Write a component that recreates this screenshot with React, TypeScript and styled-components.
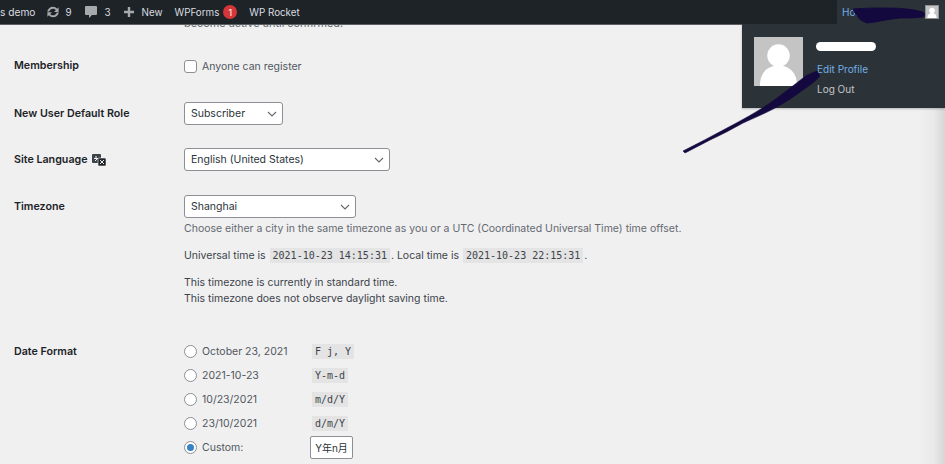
import React from "react";
import styled, { createGlobalStyle } from "styled-components";

const Global = createGlobalStyle`
  html, body { margin: 0; padding: 0; height: 100%; overflow: hidden; background: #f0f0f1; }
  body { font-family: Inter, "Liberation Sans", sans-serif; font-size: 10.5px; color: #3c434a; }
`;
const Page = styled.div`
  position: relative; width: 945px; height: 464px; overflow: hidden; background: #f0f0f1;
`;
const Bar = styled.header`
  position: relative; z-index: 2; height: 24px; background: #1d2327; color: #dcdde0;
  display: flex; align-items: center; font-size: 9.8px; border-bottom: 1px solid #5c6064;
  margin-bottom: -1px;
`;
const SiteName = styled.span`
  white-space: nowrap; font-size: 10.2px;
`;
const BarItem = styled.span<{ $ml: number; $gap: number }>`
  display: inline-flex; align-items: center; gap: ${p => p.$gap}px; margin-left: ${p => p.$ml}px; white-space: nowrap;
`;
const Badge = styled.span`
  width: 14px; height: 14px; border-radius: 50%; background: #d63638; color: #fff; font-size: 9px;
  display: inline-flex; align-items: center; justify-content: center;
`;
const Account = styled.div`
  margin-left: auto; width: 108px; height: 24px; background: #2c3338; color: #72aee6;
  display: flex; align-items: center; justify-content: space-between; padding: 0 6px 0 5px; box-sizing: border-box;
`;
const Howdy = styled.span` font-size: 10px; `;
const SmallAvatar = styled.span`
  width: 14px; height: 14px; background: #c4c4c4; display: inline-flex; border: 1px solid #8e9193; box-sizing: border-box;
`;
const Dropdown = styled.div`
  position: absolute; z-index: 3; top: 24px; left: 742px; width: 203px; height: 84px; background: #2c3338;
  box-shadow: 0 1px 2px rgba(0,0,0,.25); box-sizing: border-box; padding: 13px 0 0 12px; display: flex; gap: 14px;
`;
const BigAvatar = styled.div`
  width: 49px; height: 49px; background: #c4c4c4; overflow: hidden; display: flex;
`;
const Links = styled.div`
  display: flex; flex-direction: column; padding-top: 27px; gap: 9px; font-size: 10px; line-height: 11px;
`;
const EditLink = styled.span` color: #72aee6; `;
const LogOut = styled.span` color: #c3c4c7; `;
const Redact = styled.div`
  position: absolute; z-index: 4; left: 816px; top: 42px; width: 60px; height: 9px; background: #fff; border-radius: 5px;
`;
const Ink = styled.svg`
  position: absolute; z-index: 5; left: 0; top: 0; pointer-events: none;
`;
const Edge = styled.div`
  position: absolute; z-index: 1; right: 0; top: 24px; bottom: 0; width: 26px;
  background: linear-gradient(to right, rgba(214,214,214,0) 0%, rgba(214,214,214,.25) 55%, rgba(214,214,214,1) 100%);
`;
const Content = styled.main`
  display: grid; grid-template-columns: 170px 1fr; padding-left: 14px; margin-top: -9px;
`;
const Clipped = styled.p`
  grid-column: 2; margin: 0 0 28px; line-height: 14px; color: #646970; font-size: 10.9px;
`;
const Label = styled.div<{ $mb: number; $lh: number }>`
  font-weight: 600; color: #1d2327; font-size: 10.7px; line-height: ${p => p.$lh}px; margin-bottom: ${p => p.$mb}px;
  display: flex; align-items: center; align-self: start; gap: 3px; height: ${p => p.$lh}px;
`;
const Field = styled.div<{ $mb: number }>`
  margin-bottom: ${p => p.$mb}px; min-width: 0;
`;
const CheckLine = styled.label`
  display: flex; align-items: center; gap: 5px; height: 16px; color: #50575e;
`;
const CheckBox = styled.span`
  width: 13px; height: 13px; box-sizing: border-box; background: #fff; border: 1px solid #8c8f94; border-radius: 3px; display: inline-block;
`;
const SelectBox = styled.div<{ $w: number }>`
  width: ${p => p.$w}px; height: 23px; box-sizing: border-box; background: #fff; border: 1px solid #8c8f94;
  border-radius: 3px; display: flex; align-items: center; justify-content: space-between;
  padding: 0 5px 0 6px; color: #2c3338;
`;
const Hint = styled.p` margin: 3px 0 0; color: #646970; line-height: 16px; `;
const Para = styled.p<{ $mt: number }>` margin: ${p => p.$mt}px 0 0; line-height: 16px; color: #3c434a; `;
const Code = styled.code`
  font-family: "DejaVu Sans Mono", monospace; font-size: 10px; background: #e4e4e4; color: #3c434a;
  padding: 2px 3px; margin: 0 1px;
`;
const RadioRow = styled.div`
  display: grid; grid-template-columns: 127px auto; align-items: center; height: 24px; justify-items: start;
`;
const RadioLabel = styled.label`
  display: flex; align-items: center; gap: 5px; color: #50575e;
`;
const Radio = styled.span<{ $on?: boolean }>`
  width: 13px; height: 13px; box-sizing: border-box; border-radius: 50%; border: 1px solid #8c8f94; background: #fff;
  display: inline-flex; align-items: center; justify-content: center;
  &::after { content: ""; width: 7px; height: 7px; border-radius: 50%; background: ${p => (p.$on ? "#3582c4" : "transparent")}; }
`;
const CustomInput = styled.div`
  height: 23px; box-sizing: border-box; width: 43px; margin-left: -1px; background: #fff; border: 1px solid #8c8f94; border-radius: 2px;
  display: flex; align-items: center; justify-content: center; font-size: 10px; color: #2c3338;
  font-family: Inter, "Noto Sans CJK SC", sans-serif; white-space: nowrap;
`;

const Chevron = () => (
  <svg width="10" height="6" viewBox="0 0 10 6" fill="none" stroke="#646970" strokeWidth="1.1"><path d="M1 1l4 4 4-4" /></svg>
);
const Person = ({ s }: { s: number }) => (
  <svg width={s} height={s} viewBox="0 0 50 50"><circle cx="25" cy="19" r="11.5" fill="#fff" /><path d="M6 50c0-14 8-21 19-21s19 7 19 21z" fill="#fff" /></svg>
);
const Updates = () => (
  <svg width="16" height="16" viewBox="0 0 20 20" fill="#a7aaad"><path d="M10 3.500c2.100 0 3.900 1 5.100 2.500L17 4.200V10h-5.800l2.300-2.300C12.700 6.600 11.400 6 10 6 7.800 6 5.900 7.500 5.300 9.500H2.700C3.400 6.100 6.400 3.500 10 3.500zM3 10.200h5.800l-2.300 2.300c.8 1 2.100 1.600 3.500 1.600 2.200 0 4.100-1.500 4.700-3.600h2.600c-.7 3.500-3.700 6-7.300 6-2.100 0-3.900-1-5.100-2.500L3 15.900z" /></svg>
);
const Comment = () => (
  <svg width="14" height="14" viewBox="0 0 14 14" fill="#a7aaad"><path d="M2 1h10a1 1 0 0 1 1 1v7a1 1 0 0 1-1 1H8l-3 3v-3H2a1 1 0 0 1-1-1V2a1 1 0 0 1 1-1z" /></svg>
);
const Plus = () => (
  <svg width="12" height="12" viewBox="0 0 12 12" fill="#a7aaad"><path d="M4.800 1h2.400v3.800H11v2.400H7.200V11H4.800V7.200H1V4.800h3.800z" /></svg>
);
const Translate = () => (
  <svg width="16" height="14" viewBox="0 0 16 14"><rect x="1" y="1" width="9" height="9" rx="1" fill="#3c434a" /><path d="M3 5.500h4M5 3v2M4 8l3-3" stroke="#f0f0f1" strokeWidth="1" fill="none" /><rect x="7" y="5" width="8" height="8" rx="1" fill="#1d2327" stroke="#f0f0f1" strokeWidth=".6" /><path d="M9 7l4 4M13 7l-4 4" stroke="#f0f0f1" strokeWidth="1" /></svg>
);

const formats = [
  ["October 23, 2021", "F j, Y"],
  ["2021-10-23", "Y-m-d"],
  ["10/23/2021", "m/d/Y"],
  ["23/10/2021", "d/m/Y"],
];

export default function App() {
  return (
    <Page>
      <Global />
      <Bar>
        <SiteName>s demo</SiteName>
        <BarItem $ml={10} $gap={4}><Updates />9</BarItem>
        <BarItem $ml={12} $gap={7}><Comment />3</BarItem>
        <BarItem $ml={12} $gap={7}><Plus />New</BarItem>
        <BarItem $ml={12} $gap={4}>WPForms<Badge>1</Badge></BarItem>
        <BarItem $ml={12} $gap={0}>WP Rocket</BarItem>
        <Account>
          <Howdy>Ho...</Howdy>
          <SmallAvatar><Person s={12} /></SmallAvatar>
        </Account>
      </Bar>
      <Dropdown>
        <BigAvatar><Person s={49} /></BigAvatar>
        <Links>
          <EditLink>Edit Profile</EditLink>
          <LogOut>Log Out</LogOut>
        </Links>
      </Dropdown>
      <Redact />
      <Ink width="945" height="464" viewBox="0 0 945 464">
        <path d="M683 151C697 144 712 136 727 128C742 120 757 112 770 103C783 94 795 84 807 75L817 71L820 76C815 82 810 85 803 90C795 96 786 102 777 107C766 113 754 118 743 123C732 129 721 135 710 140L685 153Z" fill="#14093f" stroke="#14093f" strokeWidth=".6" strokeLinejoin="round" />
        <path d="M853 9C865 8 876 8 887 8C900 8 912 9 923 12C925 14 925 16 923 17C915 18 908 18 900 18C888 19 878 22 867 23C862 21 860 20 858 17C856 14 854 12 853 9Z" fill="#14093f" stroke="#14093f" strokeLinejoin="round" />
      </Ink>
      <Edge />
      <Content>
        <Clipped>become active until confirmed.</Clipped>
        <Label $mb={28} $lh={16}>Membership</Label>
        <Field $mb={28}><CheckLine><CheckBox />Anyone can register</CheckLine></Field>
        <Label $mb={23} $lh={23}>New User Default Role</Label>
        <Field $mb={23}><SelectBox $w={99}>Subscriber<Chevron /></SelectBox></Field>
        <Label $mb={24} $lh={23}>Site Language <Translate /></Label>
        <Field $mb={24}><SelectBox $w={206}>English (United States)<Chevron /></SelectBox></Field>
        <Label $mb={32} $lh={23}>Timezone</Label>
        <Field $mb={32}>
          <SelectBox $w={172}>Shanghai<Chevron /></SelectBox>
          <Hint>Choose either a city in the same timezone as you or a UTC (Coordinated Universal Time) time offset.</Hint>
          <Para $mt={11}>Universal time is <Code>2021-10-23 14:15:31</Code>. Local time is <Code>2021-10-23 22:15:31</Code>.</Para>
          <Para $mt={11}>This timezone is currently in standard time.<br />This timezone does not observe daylight saving time.</Para>
        </Field>
        <Label $mb={0} $lh={26}>Date Format</Label>
        <Field $mb={0}>
          {formats.map(([d, c]) => (
            <RadioRow key={c}>
              <RadioLabel><Radio />{d}</RadioLabel>
              <Code>{c}</Code>
            </RadioRow>
          ))}
          <RadioRow>
            <RadioLabel><Radio $on />Custom:</RadioLabel>
            <CustomInput>Y年n月</CustomInput>
          </RadioRow>
        </Field>
      </Content>
    </Page>
  );
}
